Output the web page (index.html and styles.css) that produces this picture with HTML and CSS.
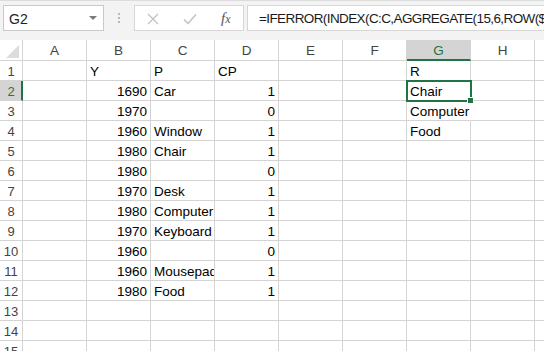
FILE: index.html
```html
<!DOCTYPE html>
<html>
<head>
<meta charset="utf-8">
<link rel="stylesheet" href="styles.css">
</head>
<body>
<div class="bar">
  <div class="namebox"><span class="name">G2</span><span class="dd"></span></div>
  <div class="grip"><i></i><i></i><i></i></div>
  <div class="fxgroup">
    <svg class="ic-x" width="12" height="12" viewBox="0 0 12 12"><path d="M1 1L11 11M11 1L1 11" stroke="#c2c2c2" stroke-width="1.3" fill="none"/></svg>
    <svg class="ic-ok" width="14" height="12" viewBox="0 0 14 12"><path d="M1 6.5L5 10.5L13 1.5" stroke="#c2c2c2" stroke-width="1.5" fill="none"/></svg>
    <span class="fx">f<span class="fxx">x</span></span>
  </div>
  <div class="formula">=IFERROR(INDEX(C:C,AGGREGATE(15,6,ROW($B$2:$B$12)/(($B$2:$B$12=1980)*($D$2:$D$12=1)),ROWS($1:1))),"")</div>
</div>
<div class="sheet">
  <div class="corner"></div><div class="ch">A</div><div class="ch">B</div><div class="ch">C</div><div class="ch">D</div><div class="ch">E</div><div class="ch">F</div><div class="ch hl">G</div><div class="ch">H</div><div class="ch"></div>

  <div class="rh">1</div><div class="c"></div><div class="c">Y</div><div class="c">P</div><div class="c">CP</div><div class="c"></div><div class="c"></div><div class="c">R</div><div class="c"></div><div class="c"></div>
  <div class="rh hl">2</div><div class="c"></div><div class="c n">1690</div><div class="c">Car</div><div class="c n">1</div><div class="c"></div><div class="c"></div><div class="c active">Chair<span class="handle"></span></div><div class="c"></div><div class="c"></div>
  <div class="rh">3</div><div class="c"></div><div class="c n">1970</div><div class="c"></div><div class="c n">0</div><div class="c"></div><div class="c"></div><div class="c spill">Computer</div><div class="c"></div><div class="c"></div>
  <div class="rh">4</div><div class="c"></div><div class="c n">1960</div><div class="c">Window</div><div class="c n">1</div><div class="c"></div><div class="c"></div><div class="c">Food</div><div class="c"></div><div class="c"></div>
  <div class="rh">5</div><div class="c"></div><div class="c n">1980</div><div class="c">Chair</div><div class="c n">1</div><div class="c"></div><div class="c"></div><div class="c"></div><div class="c"></div><div class="c"></div>
  <div class="rh">6</div><div class="c"></div><div class="c n">1980</div><div class="c"></div><div class="c n">0</div><div class="c"></div><div class="c"></div><div class="c"></div><div class="c"></div><div class="c"></div>
  <div class="rh">7</div><div class="c"></div><div class="c n">1970</div><div class="c">Desk</div><div class="c n">1</div><div class="c"></div><div class="c"></div><div class="c"></div><div class="c"></div><div class="c"></div>
  <div class="rh">8</div><div class="c"></div><div class="c n">1980</div><div class="c">Computer</div><div class="c n">1</div><div class="c"></div><div class="c"></div><div class="c"></div><div class="c"></div><div class="c"></div>
  <div class="rh">9</div><div class="c"></div><div class="c n">1970</div><div class="c">Keyboard</div><div class="c n">1</div><div class="c"></div><div class="c"></div><div class="c"></div><div class="c"></div><div class="c"></div>
  <div class="rh">10</div><div class="c"></div><div class="c n">1960</div><div class="c"></div><div class="c n">0</div><div class="c"></div><div class="c"></div><div class="c"></div><div class="c"></div><div class="c"></div>
  <div class="rh">11</div><div class="c"></div><div class="c n">1960</div><div class="c">Mousepad</div><div class="c n">1</div><div class="c"></div><div class="c"></div><div class="c"></div><div class="c"></div><div class="c"></div>
  <div class="rh">12</div><div class="c"></div><div class="c n">1980</div><div class="c">Food</div><div class="c n">1</div><div class="c"></div><div class="c"></div><div class="c"></div><div class="c"></div><div class="c"></div>
  <div class="rh">13</div><div class="c"></div><div class="c"></div><div class="c"></div><div class="c"></div><div class="c"></div><div class="c"></div><div class="c"></div><div class="c"></div><div class="c"></div>
  <div class="rh">14</div><div class="c"></div><div class="c"></div><div class="c"></div><div class="c"></div><div class="c"></div><div class="c"></div><div class="c"></div><div class="c"></div><div class="c"></div>
  <div class="rh">15</div><div class="c"></div><div class="c"></div><div class="c"></div><div class="c"></div><div class="c"></div><div class="c"></div><div class="c"></div><div class="c"></div><div class="c"></div>
</div>
</body>
</html>
```
FILE: styles.css
```css
html, body {
  margin: 0;
  padding: 0;
}
body {
  width: 544px;
  height: 351px;
  overflow: hidden;
  background: #fff;
  font-family: "Liberation Sans", Arial, sans-serif;
  color: #000;
}
.bar {
  height: 40px;
  box-sizing: border-box;
  background: #f3f3f3;
  border-top: 1px solid #dcdcdc;
  padding-top: 4px;
  display: flex;
  align-items: flex-start;
  white-space: nowrap;
}
.namebox {
  margin-left: 3px;
  width: 101px;
  height: 26px;
  box-sizing: border-box;
  border: 1px solid #c9c9c9;
  background: #fff;
  display: flex;
  align-items: center;
  justify-content: space-between;
  padding: 1px 6px 0 5px;
}
.name {
  font-size: 14px;
  color: #222;
}
.dd {
  width: 0;
  height: 0;
  border-left: 4px solid transparent;
  border-right: 4px solid transparent;
  border-top: 4px solid #7a7a7a;
  margin-top: -1px;
}
.grip {
  margin-left: 14px;
  margin-top: 8px;
  display: flex;
  flex-direction: column;
  gap: 2px;
}
.grip i {
  display: block;
  width: 2px;
  height: 2px;
  background: #b8b8b8;
}
.fxgroup {
  margin-left: 14px;
  width: 110px;
  height: 26px;
  box-sizing: border-box;
  border: 1px solid #d6d6d6;
  background: #fff;
  display: flex;
  align-items: center;
  padding-left: 12px;
}
.ic-x {
  margin-top: 1px;
}
.ic-ok {
  margin-left: 24px;
  margin-top: 2px;
}
.fx {
  margin-left: 24px;
  font-family: "Liberation Serif", "Times New Roman", serif;
  font-style: italic;
  font-size: 15px;
  color: #555;
}
.fxx {
  font-size: 12px;
}
.formula {
  flex: 1;
  margin-left: 3px;
  margin-right: -2px;
  height: 26px;
  box-sizing: border-box;
  border: 1px solid #d6d6d6;
  background: #fff;
  overflow: hidden;
  font-size: 13.5px;
  letter-spacing: -0.6px;
  line-height: 24px;
  padding: 1px 0 0 11px;
  color: #1a1a1a;
}
.sheet {
  display: grid;
  grid-template-columns: 23px repeat(9, 64px);
  grid-template-rows: 21px;
  grid-auto-rows: 20px;
  width: 544px;
  overflow: hidden;
}
.sheet > div {
  box-sizing: border-box;
  border-right: 1px solid #d4d4d4;
  border-bottom: 1px solid #d4d4d4;
  white-space: nowrap;
  overflow: hidden;
}
.corner {
  position: relative;
  background: #fff;
}
.corner::after {
  content: "";
  position: absolute;
  right: 3px;
  bottom: 2px;
  width: 0;
  height: 0;
  border-left: 13px solid transparent;
  border-bottom: 13px solid #dcdcdc;
}
.ch {
  background: #fff;
  text-align: center;
  font-size: 13.5px;
  line-height: 20px;
  padding-top: 1px;
  color: #444;
}
.ch.hl {
  background: #d4d4d4;
  color: #217346;
  border-bottom: 2px solid #217346 !important;
  line-height: 19px;
}
.rh {
  background: #fff;
  text-align: center;
  font-size: 13px;
  line-height: 17px;
  padding-top: 2px;
  color: #444;
}
.rh.hl {
  background: #d4d4d4;
  color: #217346;
  border-right: 2px solid #217346 !important;
  padding-left: 1px;
}
.c {
  font-size: 13.5px;
  line-height: 17px;
  padding: 2px 3px 0 3px;
}
.n {
  text-align: right;
  padding-right: 3px;
}
.spill {
  overflow: visible !important;
  border-right-color: transparent !important;
}
.active {
  position: relative;
  overflow: visible !important;
}
.active::after {
  content: "";
  position: absolute;
  left: -1px;
  top: -1px;
  width: 66px;
  height: 22px;
  box-sizing: border-box;
  border: 2px solid #217346;
}
.handle {
  position: absolute;
  left: 60px;
  top: 16px;
  width: 7px;
  height: 7px;
  box-sizing: border-box;
  background: #217346;
  border: 1px solid #fff;
  z-index: 2;
}
```
